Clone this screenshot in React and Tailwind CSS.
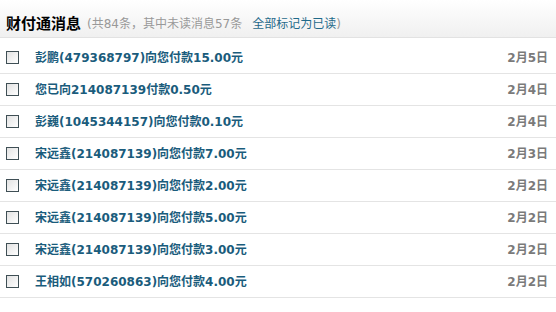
import React from 'react';

const messages = [
  { text: '彭鹏(479368797)向您付款15.00元', date: '2月5日' },
  { text: '您已向214087139付款0.50元', date: '2月4日' },
  { text: '彭巍(1045344157)向您付款0.10元', date: '2月4日' },
  { text: '宋远鑫(214087139)向您付款7.00元', date: '2月3日' },
  { text: '宋远鑫(214087139)向您付款2.00元', date: '2月2日' },
  { text: '宋远鑫(214087139)向您付款5.00元', date: '2月2日' },
  { text: '宋远鑫(214087139)向您付款3.00元', date: '2月2日' },
  { text: '王相如(570260863)向您付款4.00元', date: '2月2日' },
];

export default function App() {
  return (
    <div
      className="w-[556px] h-[312px] bg-white overflow-hidden"
      style={{ fontFamily: '"DejaVu Sans", "Noto Sans CJK SC", sans-serif' }}
    >
      {/* Header */}
      <div className="h-[38px] flex items-center pt-[11px] pl-[6px] bg-gradient-to-b from-white to-[#f0f0f0] border-b border-[#e2e2e2]">
        <span className="text-[15px] font-bold text-black">财付通消息</span>
        <span className="ml-[6px] text-[12px] text-[#999]">
          (共84条，其中未读消息57条
          <a className="ml-[10px] text-[#1f6a8a] cursor-pointer">全部标记为已读</a>)
        </span>
      </div>

      {/* List */}
      <div className="pt-[4px]">
        {messages.map((m, i) => (
          <div key={i} className="h-[32px] flex items-center border-b border-[#e4e4e4]">
            <span className="ml-[6px] w-[13px] h-[13px] border border-[#3f4f55] bg-gradient-to-br from-[#e2e2e2] to-white" />
            <span className="ml-[16px] flex-1 text-[12px] font-bold text-[#1a5c7c]">{m.text}</span>
            <span className="mr-[8px] text-[12px] font-bold text-[#7a7a7a]">{m.date}</span>
          </div>
        ))}
      </div>
    </div>
  );
}
